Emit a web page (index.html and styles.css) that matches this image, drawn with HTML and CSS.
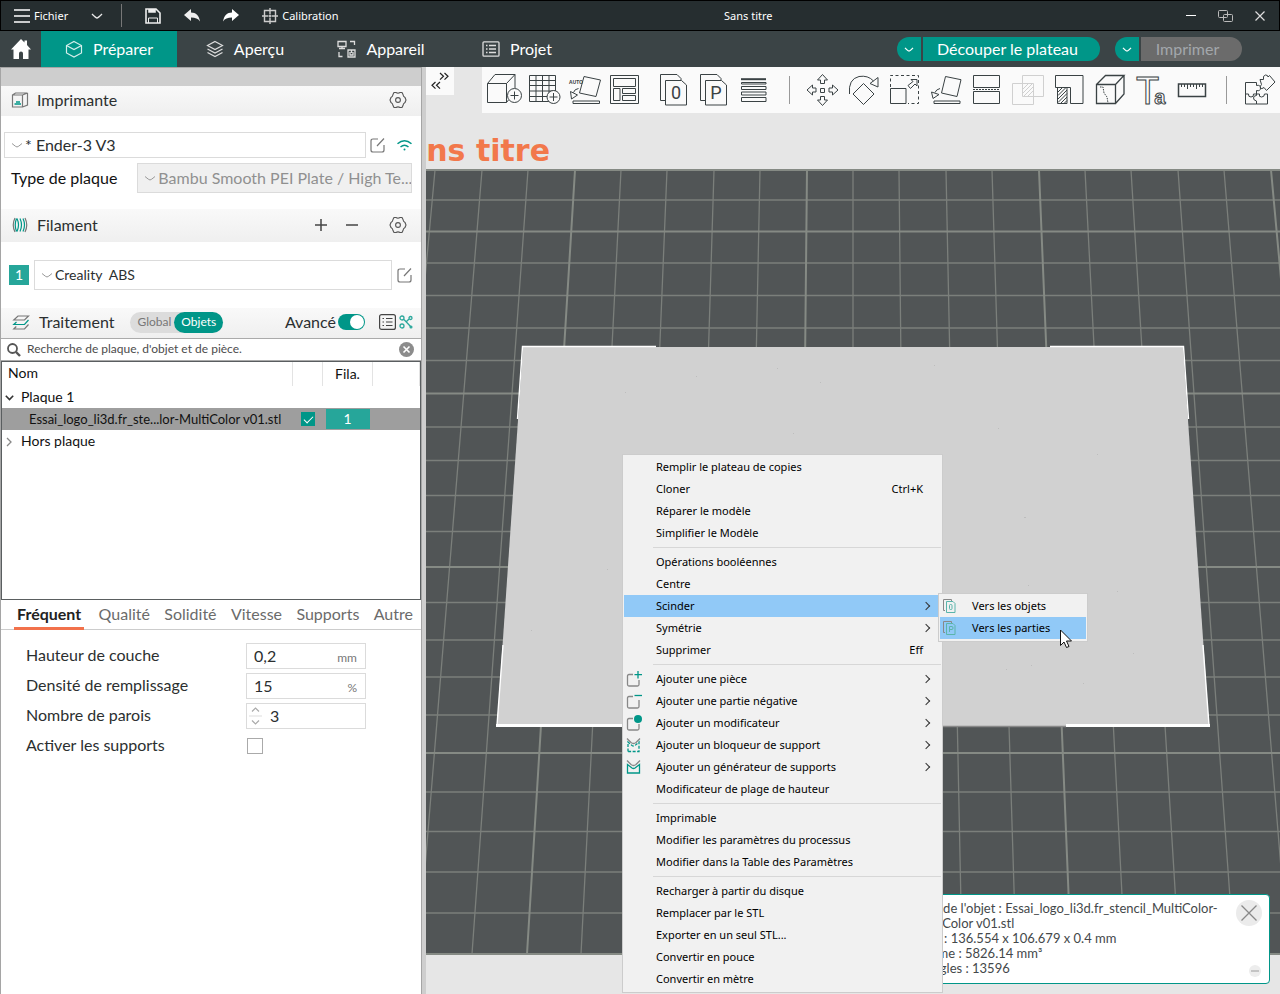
FILE: index.html
```html
<!DOCTYPE html>
<html lang="fr">
<head>
<meta charset="utf-8">
<meta name="viewport" content="width=device-width, initial-scale=1">
<title>Sans titre</title>
<link rel="stylesheet" href="styles.css">
</head>
<body>
<header class="titlebar">
  <div class="titlebar-left">
    <button class="tb-btn tb-file"><svg width="16" height="14" viewBox="0 0 16 14" stroke="#fff" stroke-width="1.3"><path d="M0 1h16M0 7h16M0 13h16"/></svg>Fichier</button>
    <button class="tb-btn" aria-label="Plus"><svg width="12" height="6" viewBox="0 0 12 6" fill="none" stroke="#e8e8e8" stroke-width="1.4"><path d="M1 1q4 4 5 4t5-4"/></svg></button>
    <span class="tb-sep"></span>
    <button class="tb-btn" aria-label="Enregistrer"><svg width="16" height="16" viewBox="0 0 16 16" fill="none" stroke="#eee" stroke-width="1.6"><path d="M1 1h10l4 4v10H1z"/><path d="M4 1v3h6V1" fill="#eee"/><path d="M3.500 15v-5h9v5" stroke-width="1"/></svg></button>
    <button class="tb-btn" aria-label="Annuler"><svg width="16" height="14" viewBox="0 0 16 14"><path fill="#eee" d="M0 6L7 0v3.500c5 0 8 3 9 9-2-3-4.500-4-9-4V12z"/></svg></button>
    <button class="tb-btn" aria-label="Rétablir"><svg width="16" height="14" viewBox="0 0 16 14"><path fill="#fff" d="M16 6L9 0v3.500c-5 0-8 3-9 9 2-3 4.500-4 9-4V12z"/></svg></button>
    <button class="tb-btn tb-cal"><svg width="16" height="16" viewBox="0 0 16 16" fill="none" stroke="#ccc" stroke-width="1.400"><path d="M2.500 2.500h11v11h-11zM8 0v6M8 10v6M0 8h6M10 8h6M6.500 8h3M8 6.500v3"/></svg>Calibration</button>
  </div>
  <h1 class="doc-title">Sans titre</h1>
  <div class="win-controls">
    <button class="tb-btn" aria-label="Réduire"><svg width="10" height="10" viewBox="0 0 10 10"><path stroke="#fff" d="M0 4.500h10"/></svg></button>
    <button class="tb-btn" aria-label="Restaurer"><svg width="15" height="12" viewBox="0 0 15 12" fill="none" stroke="#bbb"><rect x=".5" y=".5" width="9" height="7" rx="1"/><rect x="5.500" y="4.500" width="9" height="7" rx="1"/></svg></button>
    <button class="tb-btn" aria-label="Fermer"><svg width="10" height="10" viewBox="0 0 10 10"><path stroke="#ddd" stroke-width="1.200" d="M.5.5l9 9M9.500.5l-9 9"/></svg></button>
  </div>
</header>

<nav class="nav">
  <a class="nav-home" href="#" aria-label="Accueil"><svg width="20" height="20" viewBox="0 0 20 20"><path fill="#fff" d="M10 0l3.500 3.500V1.500H16V6l4 4.500h-2.500V20H12v-5.500q0-2-2-2t-2 2V20H2.500v-9.500H0z"/></svg></a>
  <a class="nav-tab active" href="#"><svg width="18" height="18" viewBox="0 0 18 18" fill="none" stroke="#d5efec" stroke-width="1.200"><path d="M9 1.500l7.500 4v7.500L9 17l-7.500-4V5.500zM1.500 5.500L9 9.500l7.500-4"/></svg>Préparer</a>
  <a class="nav-tab" href="#"><svg width="18" height="18" viewBox="0 0 18 18" fill="none" stroke="#ddd" stroke-width="1.200"><path d="M9 1.500L16.500 5.500 9 9.500 1.500 5.500zM1.500 9L9 13l7.500-4M1.500 12.500l7.500 4 7.500-4"/></svg>Aperçu</a>
  <a class="nav-tab" href="#"><svg width="19" height="18" viewBox="0 0 19 18" fill="none" stroke="#ddd" stroke-width="1.300"><path d="M1 1.500h8v5H1zM5 6.500V8M2 8.500h6M13 1.500h4.500V5M2 12v4.500h3.500M11 10h7v7h-7zM13 12v3h3v-3M14.500 10v3"/></svg>Appareil</a>
  <a class="nav-tab" href="#"><svg width="18" height="16" viewBox="0 0 18 16" fill="none" stroke="#ddd" stroke-width="1.300"><rect x="1" y=".8" width="16" height="14.400" rx="1"/><path d="M4 4.500h1.500M7 4.500h7M4 8h1.500M7 8h7M4 11.500h1.500M7 11.500h7"/></svg>Projet</a>
  <div class="nav-actions">
    <div class="split">
      <button class="split-arrow" aria-label="Options de découpe"><svg width="10" height="5" viewBox="0 0 10 5" fill="none" stroke="#fff" stroke-width="1.200"><path d="M1 .8Q4 4 5 4t4-3.200"/></svg></button>
      <button class="split-main">Découper le plateau</button>
    </div>
    <div class="split">
      <button class="split-arrow" aria-label="Options d'impression"><svg width="10" height="5" viewBox="0 0 10 5" fill="none" stroke="#fff" stroke-width="1.200"><path d="M1 .8Q4 4 5 4t4-3.200"/></svg></button>
      <button class="split-main print" disabled>Imprimer</button>
    </div>
  </div>
</nav>

<main class="workspace">
  <aside class="sidebar">
    <div class="side-top"></div>

    <section>
      <header class="sec-head">
        <svg class="sec-icon" width="18" height="16" viewBox="0 0 18 16" fill="none" stroke="#777" stroke-width="1.200"><path d="M1.500 3h10v12h-10zM1.500 3l3-2h12l-5 2M16.500 1v12l-5 2"/><path stroke="#009688" stroke-width="1.600" d="M3.500 12h6.500M5 10h4"/></svg>
        <h2>Imprimante</h2>
        <button class="icon-btn push" aria-label="Réglages de l'imprimante"><svg width="18" height="18" viewBox="0 0 18 18" fill="none" stroke="#555" stroke-width="1.100"><path d="M5 1.500h2q2 1.300 4 0h2l1 2q.2 2 2 3L17 9l-1 2.500q-1.800 1-2 3l-1 2h-2q-2-1.300-4 0H5l-1-2q-.2-2-2-3L1 9l1-2.500q1.800-1 2-3z"/><circle cx="9" cy="9" r="2.400"/></svg></button>
      </header>
      <div class="sec-body printer-body">
        <div class="field-row">
          <select class="combo" aria-label="Imprimante"><option>* Ender-3 V3</option></select>
          <button class="icon-btn" aria-label="Modifier l'imprimante"><svg width="15" height="15" viewBox="0 0 15 15" fill="none" stroke="#777" stroke-width="1.200"><path d="M8 1H3Q1 1 1 3v9q0 2 2 2h9q2 0 2-2V7M7 8l7-7.500"/></svg></button>
          <button class="icon-btn wifi" aria-label="Connexion"><svg width="15" height="11" viewBox="0 0 15 11" fill="none" stroke="#009688" stroke-width="1.500"><path d="M.5 3.800q7-6 14 0M3.500 7q4-3.500 8 0"/><circle cx="7.500" cy="9.500" r="1" fill="#009688" stroke="none"/></svg></button>
        </div>
        <div class="field-row plate-row">
          <label for="plate">Type de plaque</label>
          <select id="plate" class="combo" disabled><option>Bambu Smooth PEI Plate / High Te...</option></select>
        </div>
      </div>
    </section>

    <section>
      <header class="sec-head filament-head">
        <svg class="sec-icon" width="16" height="16" viewBox="0 0 16 16" fill="none" stroke="#777" stroke-width="1.200"><path d="M3 1Q-.5 8 3 15M13 1q3.500 7 0 14"/><path stroke="#009688" d="M5 1.500q3 6.500 0 13M8 1.500q3 6.500 0 13M4.500 1.500Q2 8 4.500 14.500M11 1.500q3 6.500 0 13"/></svg>
        <h2>Filament</h2>
        <button class="icon-btn push" aria-label="Ajouter un filament"><svg width="12" height="12" viewBox="0 0 12 12"><path stroke="#444" stroke-width="1.500" d="M0 6h12M6 0v12"/></svg></button>
        <button class="icon-btn minus" aria-label="Retirer un filament"><svg width="12" height="12" viewBox="0 0 12 12"><path stroke="#444" stroke-width="1.500" d="M0 6h12"/></svg></button>
        <button class="icon-btn" aria-label="Réglages du filament"><svg width="18" height="18" viewBox="0 0 18 18" fill="none" stroke="#555" stroke-width="1.100"><path d="M5 1.500h2q2 1.300 4 0h2l1 2q.2 2 2 3L17 9l-1 2.500q-1.800 1-2 3l-1 2h-2q-2-1.300-4 0H5l-1-2q-.2-2-2-3L1 9l1-2.500q1.800-1 2-3z"/><circle cx="9" cy="9" r="2.400"/></svg></button>
      </header>
      <div class="sec-body filament-body">
        <span class="swatch">1</span>
        <select class="combo small" aria-label="Filament 1"><option>Creality&nbsp; ABS</option></select>
        <button class="icon-btn" aria-label="Modifier le filament"><svg width="15" height="15" viewBox="0 0 15 15" fill="none" stroke="#777" stroke-width="1.200"><path d="M8 1H3Q1 1 1 3v9q0 2 2 2h9q2 0 2-2V7M7 8l7-7.500"/></svg></button>
      </div>
    </section>

    <section class="process">
      <header class="sec-head process-head">
        <svg class="sec-icon" width="16" height="15" viewBox="0 0 16 15" fill="none" stroke="#777" stroke-width="1.200"><path d="M5 1h10.500l-4 4H.8zM15.500 9.500l-4 4.500H.8l2.500-2.500"/><path stroke="#009688" d="M15.500 5l-4 4.500H.8L3.500 7"/></svg>
        <h2>Traitement</h2>
        <div class="seg"><button>Global</button><button class="on">Objets</button></div>
        <label class="adv push">Avancé <input type="checkbox" class="switch" checked></label>
        <button class="icon-btn list-btn" aria-label="Liste"><svg width="17" height="16" viewBox="0 0 17 16" fill="none" stroke="#444" stroke-width="1.200"><rect x=".6" y=".6" width="15.800" height="14.800" rx="2"/><path d="M3.500 4.500H5M7 4.500h6.500M3.500 8H5M7 8h6.500M3.500 11.500H5M7 11.500h6.500"/></svg></button>
        <button class="icon-btn" aria-label="Comparer"><svg width="14" height="14" viewBox="0 0 14 14" fill="none" stroke="#2ca89c" stroke-width="1.300"><circle cx="3" cy="3" r="2"/><circle cx="11.500" cy="3" r="1.500"/><circle cx="3" cy="11" r="2"/><path d="M5 4.500L12 12M10 4L7 7"/><circle cx="12" cy="12" r=".9"/></svg></button>
      </header>
      <div class="search">
        <svg width="14" height="14" viewBox="0 0 14 14" fill="none" stroke="#555" stroke-width="1.800"><circle cx="5.500" cy="5.500" r="4.500"/><path stroke-width="2.400" d="M9 9l4 4"/></svg>
        <input type="text" aria-label="Recherche" placeholder="Recherche de plaque, d'objet et de pièce.">
        <button class="icon-btn" aria-label="Effacer"><svg width="15" height="15" viewBox="0 0 15 15"><circle cx="7.500" cy="7.500" r="7.500" fill="#8c8c8c"/><path stroke="#fff" stroke-width="1.600" d="M4.500 4.500l6 6M10.500 4.500l-6 6"/></svg></button>
      </div>
      <div class="tree">
        <table>
          <colgroup><col><col class="c-check"><col class="c-fila"><col class="c-rest"></colgroup>
          <thead><tr><th>Nom</th><th></th><th class="mid">Fila.</th><th></th></tr></thead>
          <tbody>
            <tr><td class="node"><svg width="9" height="6" viewBox="0 0 9 6" fill="none" stroke="#333" stroke-width="1.600"><path d="M.8.8l3.700 3.700L8.200.8"/></svg>Plaque 1</td><td></td><td></td><td></td></tr>
            <tr class="selected"><td class="leaf">Essai_logo_li3d.fr_ste...lor-MultiColor v01.stl</td><td class="mid"><input type="checkbox" class="tick" aria-label="Imprimable" checked></td><td><span class="fila">1</span></td><td></td></tr>
            <tr><td class="node"><svg width="9" height="10" viewBox="0 0 9 10" fill="none" stroke="#888" stroke-width="1.300"><path d="M2 1l4 4-4 4"/></svg>Hors plaque</td><td></td><td></td><td></td></tr>
          </tbody>
        </table>
      </div>
      <div class="tabs">
        <button class="tab current">Fréquent</button><button class="tab">Qualité</button><button class="tab">Solidité</button><button class="tab">Vitesse</button><button class="tab">Supports</button><button class="tab">Autre</button>
      </div>
      <form class="params">
        <label for="p1">Hauteur de couche</label><div class="num"><input id="p1" type="text" value="0,2"><span>mm</span></div>
        <label for="p2">Densité de remplissage</label><div class="num"><input id="p2" type="text" value="15"><span>%</span></div>
        <label for="p3">Nombre de parois</label><div class="num"><svg width="13" height="20" viewBox="0 0 13 20" fill="none" stroke="#aaa"><path stroke-width="1.200" d="M3 5.500l3.500-3.500L10 5.500M3 14.500l3.500 3.500 3.500-3.500"/><path stroke="#ddd" d="M0 10h13"/></svg><input id="p3" type="text" value="3"></div>
        <label for="p4">Activer les supports</label><div><input id="p4" type="checkbox" class="box"></div>
      </form>
    </section>
  </aside>

  <section class="stage">
    <svg class="scene" viewBox="426 67 854 927" preserveAspectRatio="xMidYMid slice">
      <rect x="426" y="67" width="854" height="927" fill="#e6e6e6"/>
      <text x="550" y="161" text-anchor="end" class="plate-name">Sans titre</text>
      <path fill="#515556" d="M426 170h854v784H426z"/>
      <g fill="none" stroke="#7b7f7b">
        <path stroke-width="1.300" d="M435 170L363 954M482 170L418 954M528 170L472 954M621 170L581 954M667 170L635 954M714 170L690 954M760 170L744 954M853 170V954M899 170L907 954M946 170L962 954M992 170L1016 954M1085 170L1125 954M1131 170L1179 954M1178 170L1234 954M1224 170L1288 954"/>
        <path stroke-width="1.300" d="M426 200h854M426 263h854M426 295.500h854M426 328h854M426 360.500h854M426 427h854M426 460.500h854M426 495.500h854M426 531.500h854M426 602.500h854M426 640h854M426 677h854M426 715h854M426 792h854M426 831.500h854M426 872h854M426 913h854"/>
        <path stroke="#858a84" stroke-width="2" d="M575 170L527 954M807 170L799 954M1039 170L1071 954M1271 170L1343 954M426 170h854M426 231.500h854M426 393.500h854M426 567h854M426 753h854M426 954h854"/>
      </g>
      <path fill="#d1d1d1" d="M523 347h660l26 379H497z"/>
      <path stroke="#888" stroke-width="1.500" d="M622 726.500h444"/>
      <path fill="none" stroke="#fff" stroke-width="1.400" d="M656 346.500H522.500l-5 72.500M1050 346.500h133.500l5 72.500M503 645l-6 80M1203 645l6 80"/>
      <path stroke="#fff" stroke-width="3" d="M496 725.500h126M1066 725.500h144"/>
      <g fill="#bdbdbd"><path d="M696 376h1v1h-1zM777 368h1v1h-1zM820 382h1v1h-1zM934 365h1v1h-1zM625 392h1v1h-1zM998 428h1v1h-1zM1028 585h1v1h-1zM1117 591h1v1h-1zM1133 653h1v1h-1zM1031 665h1v1h-1zM1006 669h1v1h-1zM1083 683h1v1h-1zM1024 517h2v1h-2zM607 569h1v1h-1zM531 630h1v1h-1zM793 433h1v1h-1zM1097 454h1v1h-1z"/></g>
    </svg>

    <button class="collapse" aria-label="Replier le panneau"><svg width="18" height="18" viewBox="0 0 18 18" fill="none" stroke="#222" stroke-width="1.200"><path d="M9 1l3.500 3.300L9 7.600M13.500 1L17 4.300l-3.500 3.300M4.500 10L1 13.300l3.500 3.300M9 10l-3.500 3.300L9 16.600"/></svg></button>

    <div class="toolbar">
      <button aria-label="Ajouter"><svg viewBox="0 0 41 46"><path d="M3.500 16.500h19v19h-19zM3.500 16.500L11 7.500h20L22.500 16.500M31 7.500V21M22.500 35.500l2-2.500"/><circle cx="30.500" cy="28.500" r="7"/><path d="M30.500 24.500v8M26.500 28.500h8"/></svg></button>
      <button aria-label="Ajouter une plaque"><svg viewBox="0 0 41 46"><path d="M4.500 8.500h26v26h-26zM11 8.500v26M17.500 8.500v26M24 8.500v26M4.500 13.500h26M4.500 18.500h26M4.500 24h26M4.500 29.500h26"/><circle cx="28.500" cy="30" r="6.500" fill="#fafafa"/><path d="M28.500 26v8M24.500 30h8"/></svg></button>
      <button aria-label="Orientation automatique"><svg viewBox="0 0 41 46"><text x="3" y="17" class="auto">AUTO</text><path d="M18 9.500L34.500 13 30 29.500 13.500 26zM12.500 21.500q-4 .5-5 4M4.500 24.500l7 3.500-6 4zM7 34h26.500v2.500H7z"/></svg></button>
      <button aria-label="Arranger"><svg viewBox="0 0 41 46"><path d="M3.500 8.500h28v28h-28zM6.500 11.500h22v8h-22zM6.500 21.500h6.500v12H6.500zM15.500 21.500h13v5h-13zM15.500 28.500h13v5h-13z"/></svg></button>
      <button class="gap" aria-label="Scinder en objets"><svg viewBox="0 0 41 46"><path d="M12 33.500H7.500v-26h16.500l4 4v1.500M12.500 13.500h16l5 4.500v20h-21z"/><text x="23" y="32" class="glyph">0</text></svg></button>
      <button aria-label="Scinder en pièces"><svg viewBox="0 0 41 46"><path d="M11 33.500H6.500v-26h16.500l4 4v1.500M11.500 13.500h16l5 4.500v20h-21z"/><text x="22" y="32" class="glyph">P</text></svg></button>
      <button aria-label="Hauteur de couche variable"><svg viewBox="0 0 41 46"><path stroke-width="2" d="M6 12.200h25"/><path d="M6.500 15.500h24.500v1.500H6.500zM6.500 19.500h24.500v3H6.500zM6.500 25h24.500v3H6.500zM6.500 30.500h24.500v4H6.500z"/></svg></button>
      <span class="tool-sep"></span>
      <button aria-label="Déplacer"><svg viewBox="0 0 41 46"><path d="M18.500 21.500h4v4h-4zM20.500 7.500l5 5.500h-3v3.500h-4V13h-3zM20.500 38.500l5-5.500h-3v-3.500h-4V33h-3zM5 23l5.500-5v3H14v4h-3.500v3zM36 23l-5.500-5v3H27v4h3.500v3z"/></svg></button>
      <button aria-label="Pivoter"><svg viewBox="0 0 41 46"><path d="M20.500 16.500L31 27 20.500 37.500 10 27zM6.500 27Q5 12 16 9.500q9-1.500 14.500 4.500M35 10.500v9.500l-8-3.500z"/></svg></button>
      <button aria-label="Mettre à l'échelle"><svg viewBox="0 0 41 46"><path stroke-dasharray="3 2.500" d="M6.500 20V8.500h28v28H24"/><path d="M6.500 21.500H22v15H6.500zM24 18.500l5-4-2-2h6v6.500l-2-2-4.500 4.500z"/></svg></button>
      <button aria-label="Poser sur une face"><svg viewBox="0 0 41 46"><path d="M20.500 9.500L36 12.700 32 29.500 16.500 26zM15 21.500q-4 1-5 4M6.500 25l7.500 2.500-6 4zM9 34h26v2.500H9z"/></svg></button>
      <button aria-label="Couper"><svg viewBox="0 0 41 46"><path d="M7.500 8.500h26v12h-26zM7.500 24.500h26v12h-26z"/><path stroke-dasharray="2 1" d="M7 22.500h27"/></svg></button>
      <button class="dim" aria-label="Opérations booléennes"><svg viewBox="0 0 41 46"><path d="M5.500 16.500h21v21h-21zM15.500 8.500h21v21h-21zM16 22l5-5M16 26l9-9M17 29l9-9M21 29l5-5"/></svg></button>
      <button aria-label="Peindre les supports"><svg viewBox="0 0 41 46"><path d="M7.500 20.500v-12h27.500v28H22.500v-16zM9.500 20.500v16H19v-16M10 25l4.500-4.500M10 28.500l8-8M10 32l9-9M10 35.500l9-9M12.500 36.500l6.500-6.500M16 36.500l3-3"/></svg></button>
      <button aria-label="Peindre la couture"><svg viewBox="0 0 41 46"><path stroke-width="1.300" d="M7.500 17.500h19v19h-19zM7.500 17.500l9-9H35l-8.500 9M35 8.500V27l-8.500 9.500"/><path stroke-dasharray="1.500 1" d="M11 20h3l1 6 3 4 1 6"/></svg></button>
      <button aria-label="Texte"><svg viewBox="0 0 41 46"><text x="6" y="36.500"><tspan class="big-t">T</tspan><tspan class="small-a" dx="-5">a</tspan></text></svg></button>
      <button aria-label="Mesurer"><svg viewBox="0 0 41 46"><path stroke-width="1.500" d="M7.500 17h27v12.500h-27z"/><path d="M10.500 17v3M13.500 17v3M16.500 17v5M19.500 17v3M22.500 17v3M25.500 17v5M28.500 17v3M31.500 17v3"/></svg></button>
      <span class="tool-sep last"></span>
      <button aria-label="Assembler"><svg viewBox="0 0 41 46"><path d="M6.500 15.500h11v3q4-1 4 2.500t-4 2.500v3.500h-3q.5 3-2.500 3t-2.500-3h-3zM6.500 27v10h11v-3q-3-.5-3-3t3-2.500V27M17.500 37h11V27h-3q0 3-3 3t-2-3h-3M21 12.500h3.500q-1-4 2-4.500 2.500 0 2.500 2L30.500 8.500 36 15l-8.500 8.500-2.500-3q-2.500 2-3.500.500t1-3.500z"/></svg></button>
    </div>

    <aside class="info">
      <p>Nom de l'objet : Essai_logo_li3d.fr_stencil_MultiColor-<br>MultiColor v01.stl</p>
      <p>Taille : 136.554 x 106.679 x 0.4 mm</p>
      <p>Volume : 5826.14 mm³</p>
      <p>Triangles : 13596</p>
      <button class="info-close" aria-label="Fermer"><svg width="26" height="26" viewBox="0 0 26 26"><circle cx="13" cy="13" r="13" fill="#ebebeb"/><path stroke="#888" stroke-width="1.300" d="M5.500 5.500l15 15M20.500 5.500l-15 15"/></svg></button>
      <button class="info-min" aria-label="Réduire"><svg width="12" height="12" viewBox="0 0 12 12"><circle cx="6" cy="6" r="6" fill="#ededed"/><path stroke="#c4c4c4" stroke-width="2" d="M2 6h8"/></svg></button>
    </aside>

    <div class="menu main-menu" role="menu">
      <button role="menuitem">Remplir le plateau de copies</button>
      <button role="menuitem">Cloner<kbd>Ctrl+K</kbd></button>
      <button role="menuitem">Réparer le modèle</button>
      <button role="menuitem">Simplifier le Modèle</button>
      <hr>
      <button role="menuitem">Opérations booléennes</button>
      <button role="menuitem">Centre</button>
      <button role="menuitem" class="sub hot">Scinder</button>
      <button role="menuitem" class="sub">Symétrie</button>
      <button role="menuitem">Supprimer<kbd>Eff</kbd></button>
      <hr>
      <button role="menuitem" class="sub"><svg class="mi" viewBox="0 0 16 16"><path d="M7 3.500H3q-1.500 0-1.500 1.500v8.500Q1.500 15 3 15h8.500q1.500 0 1.500-1.500V9"/><path class="teal" d="M12 0v7.500M8.500 3.700h7.500"/></svg>Ajouter une pièce</button>
      <button role="menuitem" class="sub"><svg class="mi" viewBox="0 0 16 16"><path d="M7 3.500H3q-1.500 0-1.500 1.500v8.500Q1.500 15 3 15h8.500q1.500 0 1.500-1.500V7"/><path class="teal" d="M8.500 2.500h7.500"/></svg>Ajouter une partie négative</button>
      <button role="menuitem" class="sub"><svg class="mi" viewBox="0 0 16 16"><path d="M7 3.500H3q-1.500 0-1.500 1.500v8.500Q1.500 15 3 15h8.500q1.500 0 1.500-1.500V9"/><circle cx="12" cy="4" r="4" fill="#009688" stroke="none"/></svg>Ajouter un modificateur</button>
      <button role="menuitem" class="sub"><svg class="mi" viewBox="0 0 16 16"><path d="M1 1.500L5 5.500q2.500 2 5 0l4-4"/><path class="teal" stroke-dasharray="3 1.500" d="M2 14.500V5l4 3.500q1.500 1 3 0L13 5v9.500z"/></svg>Ajouter un bloqueur de support</button>
      <button role="menuitem" class="sub"><svg class="mi" viewBox="0 0 16 16"><path d="M1 1.500L5 5.500q2.500 2 5 0l4-4"/><path class="teal" d="M1.500 5.500V14h12V5.500L9 9q-1.500 1-3 0z"/></svg>Ajouter un générateur de supports</button>
      <button role="menuitem">Modificateur de plage de hauteur</button>
      <hr>
      <button role="menuitem">Imprimable</button>
      <button role="menuitem">Modifier les paramètres du processus</button>
      <button role="menuitem">Modifier dans la Table des Paramètres</button>
      <hr>
      <button role="menuitem">Recharger à partir du disque</button>
      <button role="menuitem">Remplacer par le STL</button>
      <button role="menuitem">Exporter en un seul STL...</button>
      <button role="menuitem">Convertir en pouce</button>
      <button role="menuitem">Convertir en mètre</button>
    </div>

    <div class="menu sub-menu" role="menu">
      <button role="menuitem"><svg class="mi" viewBox="0 0 16 16"><path stroke-width="1" d="M3 12.500H1.500v-11h8V3"/><path class="teal soft" d="M4.500 3.500h6.500l2 2v9H4.500z"/><rect class="teal soft" x="7.500" y="6.500" width="2.500" height="5" rx="1"/></svg>Vers les objets</button>
      <button role="menuitem" class="hot"><svg class="mi" viewBox="0 0 16 16"><path stroke-width="1" d="M3 12.500H1.500v-11h8V3"/><path class="teal soft" d="M4.500 3.500h6.500l2 2v9H4.500zM7.500 12V6.500H10q1 0 1 1.500t-1 1.500H7.500"/></svg>Vers les parties</button>
    </div>
    <svg class="pointer" width="12" height="20" viewBox="0 0 12 20"><path fill="#fff" stroke="#111" d="M.5 1v15.500l3.500-3.500 2.500 5.500 2.500-1-2.500-5.500H11.500z"/></svg>
  </section>
</main>
</body>
</html>
```
FILE: styles.css
```css
* { box-sizing: border-box; }
body {
  margin: 0;
  height: 100vh;
  display: flex;
  flex-direction: column;
  overflow: hidden;
  background: #fff;
  color: #2b2f30;
  font: 16px/20px Lato, "Open Sans", sans-serif;
}
button, input, select { font: inherit; color: inherit; margin: 0; }
button { background: none; border: 0; padding: 0; cursor: pointer; }
svg { display: block; flex: none; }
h1, h2, p { margin: 0; font-weight: 400; }

/* Title bar */
.titlebar {
  display: flex;
  align-items: center;
  height: 31px;
  flex: none;
  padding: 0 14px 0 13px;
  background: #262e30;
  border: 1px solid #000;
  color: #fff;
  font: 11px/16px "Noto Sans", sans-serif;
}
.titlebar-left, .win-controls { display: flex; align-items: center; }
.titlebar-left { gap: 23px; }
.win-controls { gap: 22px; }
.tb-btn { display: flex; align-items: center; gap: 4px; }
.tb-sep { width: 1px; height: 23px; background: #777; margin: 0 0 0 -5px; }
.doc-title { flex: 1; padding-right: 28px; font-size: 11px; text-align: center; }

/* Navigation */
.nav { display: flex; flex: none; height: 36px; background: #3b4446; color: #fff; }
.nav-home { width: 41px; display: grid; place-items: center; }
.nav-tab {
  display: flex;
  align-items: center;
  justify-content: center;
  gap: 10px;
  width: 136px;
  color: #fff;
  text-decoration: none;
}
.nav-tab.active { background: #009688; }
.nav-actions { display: flex; align-items: center; gap: 15px; margin-left: auto; padding-right: 38px; }
.split { display: flex; gap: 2px; }
.split button { height: 24px; background: #009688; }
.split-arrow { width: 24px; display: grid; place-items: center; border-radius: 12px 0 0 12px; }
.split-main { width: 177px; padding-right: 8px; border-radius: 0 12px 12px 0; color: #fff; }
.split .print { width: 101px; background: #6b6b6b; color: #a3a7ab; }

/* Workspace */
.workspace { flex: 1; display: flex; min-height: 0; background: #cecece; }
.sidebar {
  width: 422px;
  flex: none;
  margin-right: 4px;
  display: flex;
  flex-direction: column;
  background: #fff;
  border: 1px solid #a5a5a5;
  border-bottom: 0;
}
.side-top { height: 18px; background: #cecece; }
.sec-head {
  display: flex;
  align-items: center;
  height: 30px;
  padding: 0 14px 2px 10px;
  background: linear-gradient(#f9f9f9, #efefef);
}
.filament-head { height: 33px; }
.process-head { padding: 0 8px 2px 11px; }
.sec-icon { width: 18px; }
.sec-head h2 { font-size: 16px; margin-left: 8px; }
.process-head h2 { margin-left: 9px; }
.push { margin-left: auto; }
.icon-btn { display: grid; place-items: center; flex: none; }
.minus { margin: 0 31px 0 19px; }
.field-row { display: flex; align-items: center; }
.printer-body { height: 93px; padding: 16px 9px 0 3px; }
.wifi { margin-left: 12px; }
.combo {
  flex: 1;
  min-width: 0;
  height: 26px;
  padding: 0 0 1px 20px;
  border: 1px solid #dbdbdb;
  border-radius: 0;
  appearance: none;
  color: #2b2f30;
  background: #fff url("data:image/svg+xml,%3Csvg xmlns='http://www.w3.org/2000/svg' width='10' height='5' fill='none' stroke='%23999'%3E%3Cpath d='M0 .5Q4 4 5 4T10 .5'/%3E%3C/svg%3E") no-repeat 7px 50%;
}
.printer-body .combo { margin-right: 4px; }
.plate-row { margin-top: 5px; padding-left: 7px; color: #111; }
.plate-row .combo { height: 30px; margin: 0 0 0 20px; background-color: #f0f0f0; color: #909090; opacity: 1; }
.filament-body { display: flex; align-items: center; height: 66px; padding: 0 9px 0 8px; }
.swatch, .fila { display: grid; place-items: center; height: 20px; background: #26a69a; color: #fff; font-size: 14px; }
.swatch { width: 20px; margin-right: 5px; }
.combo.small { height: 30px; font-size: 14px; margin-right: 5px; }
.process { flex: 1; display: flex; flex-direction: column; }
.seg { display: flex; margin-left: 16px; background: #dcdcdc; border-radius: 11px; font-size: 12px; color: #777; }
.seg button { height: 21px; padding: 0 0 0 7px; }
.seg .on { margin-left: 3px; padding: 0 7px; border-radius: 11px; background: #009688; color: #fff; }
.adv { display: flex; align-items: center; gap: 2px; }
.switch { appearance: none; width: 27px; height: 16px; border-radius: 8px; background: #009688; padding: 1px; }
.switch::before { content: ""; display: block; width: 14px; height: 14px; margin-left: 11px; border-radius: 50%; background: #fff; }
.list-btn { margin: 0 3px 0 14px; }
.search {
  display: flex;
  align-items: center;
  height: 23px;
  padding: 0 7px 0 6px;
  border-top: 1px solid #aaa;
  border-bottom: 1px solid #aaa;
}
.search input { flex: 1; min-width: 0; border: 0; padding: 0 0 1px 6px; outline: 0; font-size: 12px; background: none; }
.search input::placeholder { color: #4c4c4c; opacity: 1; }
.tree { height: 239px; border: 1px solid #5a5e60; color: #111; font-size: 14px; }
.tree table { width: 100%; table-layout: fixed; border-collapse: collapse; }
.c-check { width: 30px; }
.c-fila { width: 50px; }
.c-rest { width: 47px; }
.tree th { height: 24px; padding: 0 6px 2px; text-align: left; font-weight: 400; border-right: 1px solid #e3e3e3; }
.tree td { height: 22px; padding: 0; white-space: nowrap; }
.tree .mid { text-align: center; padding: 0; }
.node svg { display: inline-block; margin: 0 7px 0 3px; vertical-align: middle; }
.selected { background: #9e9e9e; }
.selected .leaf { padding-left: 27px; font-size: 13px; }
.fila { width: 44px; margin-left: 3px; }
.tick { appearance: none; display: block; width: 14px; height: 14px; margin: 0 auto; background: #009688; }
.tick::before { content: ""; display: block; width: 8px; height: 4px; margin: 4px 3px; border: solid #fff; border-width: 0 0 1px 1px; rotate: -45deg; }
.tabs { display: flex; justify-content: space-between; height: 30px; padding: 0 8px 0 13px; border-bottom: 1px solid #ccc; }
.tab { height: 30px; color: #6b6b6b; padding-bottom: 2px; }
.current { padding: 1px 3px 0; color: #222; font-weight: 700; border-bottom: 3px solid #f2714b; }
.params { display: grid; grid-template-columns: 220px 120px; grid-auto-rows: 30px; align-items: center; padding: 11px 0 0 25px; }
.params label { padding-bottom: 2px; }
.num { display: flex; align-items: center; height: 26px; padding: 0 8px 0 7px; border: 1px solid #dbdbdb; }
.num svg { margin: 0 4px 0 -5px; }
.num input { flex: 1; min-width: 0; border: 0; padding: 0 0 1px; outline: 0; background: none; }
.num svg + input { padding-left: 4px; }
.num span { font-size: 12px; color: #777; padding-top: 3px; }
.box { appearance: none; display: block; width: 16px; height: 16px; margin-left: 1px; border: 1px solid #aaa; }

/* 3D stage */
.stage { position: relative; flex: 1; min-width: 0; overflow: hidden; }
.scene { position: absolute; inset: 0; width: 100%; height: 100%; }
.plate-name { font: 700 30px "DejaVu Sans", sans-serif; fill: #f2784b; }
.collapse { position: absolute; top: 0; left: 0; width: 28px; height: 28px; padding: 0 0 0 5px; background: #fafafa; }
.toolbar {
  position: absolute;
  top: 0;
  left: 56px;
  right: 0;
  display: flex;
  height: 46px;
  padding-left: 2px;
  background: #fafafa;
}
.toolbar button { flex: none; width: 41px; height: 46px; }
.toolbar .gap { margin-left: 5px; }
.toolbar svg { width: 41px; height: 46px; fill: none; stroke: #3a4244; stroke-width: 1; }
.toolbar .dim svg { stroke: #d0d0d0; }
.toolbar text { stroke: none; fill: #3a4244; }
.toolbar .auto { font: 700 5px "Open Sans", sans-serif; }
.toolbar .glyph { font: 18px Roboto, sans-serif; text-anchor: middle; }
.toolbar .big-t, .toolbar .small-a { fill: #fafafa; stroke: #3a4244; }
.toolbar .big-t { font: 38px "Liberation Sans", sans-serif; }
.toolbar .small-a { font: 700 20px "Liberation Sans", sans-serif; }
.tool-sep { flex: none; width: 1px; height: 28px; margin: 9px 12px 0 13px; background: #999; }
.tool-sep.last { margin-left: 14px; }

/* Object information */
.info {
  position: absolute;
  right: 10px;
  bottom: 10px;
  width: 370px;
  height: 90px;
  padding: 6px 11px;
  background: #fff;
  border: 1px solid #009688;
  border-radius: 4px;
  color: #44484a;
  font-size: 13px;
  line-height: 15px;
}
.info-close { position: absolute; top: 5px; right: 7px; }
.info-min { position: absolute; right: 8px; bottom: 6px; }

/* Context menus */
.menu {
  position: absolute;
  display: flex;
  flex-direction: column;
  padding: 1px 1px 2px;
  background: #f1f1f1;
  border: 1px solid #ccc;
  color: #000;
  font: 11px/16px "Noto Sans", sans-serif;
}
.main-menu { left: 196px; top: 387px; width: 321px; }
.sub-menu { left: 512px; top: 526px; width: 150px; }
.menu button { display: flex; align-items: center; height: 22px; padding: 0 18px 0 32px; text-align: left; }
.menu hr { width: 288px; height: 1px; margin: 3px 0 3px auto; border: 0; background: #d7d7d7; }
.menu kbd { margin-left: auto; font: inherit; }
.menu .hot { background: #91c9f7; }
.menu .sub::after { content: ""; width: 5px; height: 5px; margin: 0 -6px 0 auto; border: solid #333; border-width: 1px 1px 0 0; rotate: 45deg; }
.mi { width: 16px; height: 16px; margin: 0 14px 0 -30px; fill: none; stroke: #888; stroke-width: 1.3; }
.mi .teal { stroke: #009688; }
.mi .soft { stroke: #5ab5ab; stroke-width: 1; }
.pointer { position: absolute; left: 634px; top: 562px; }
```
